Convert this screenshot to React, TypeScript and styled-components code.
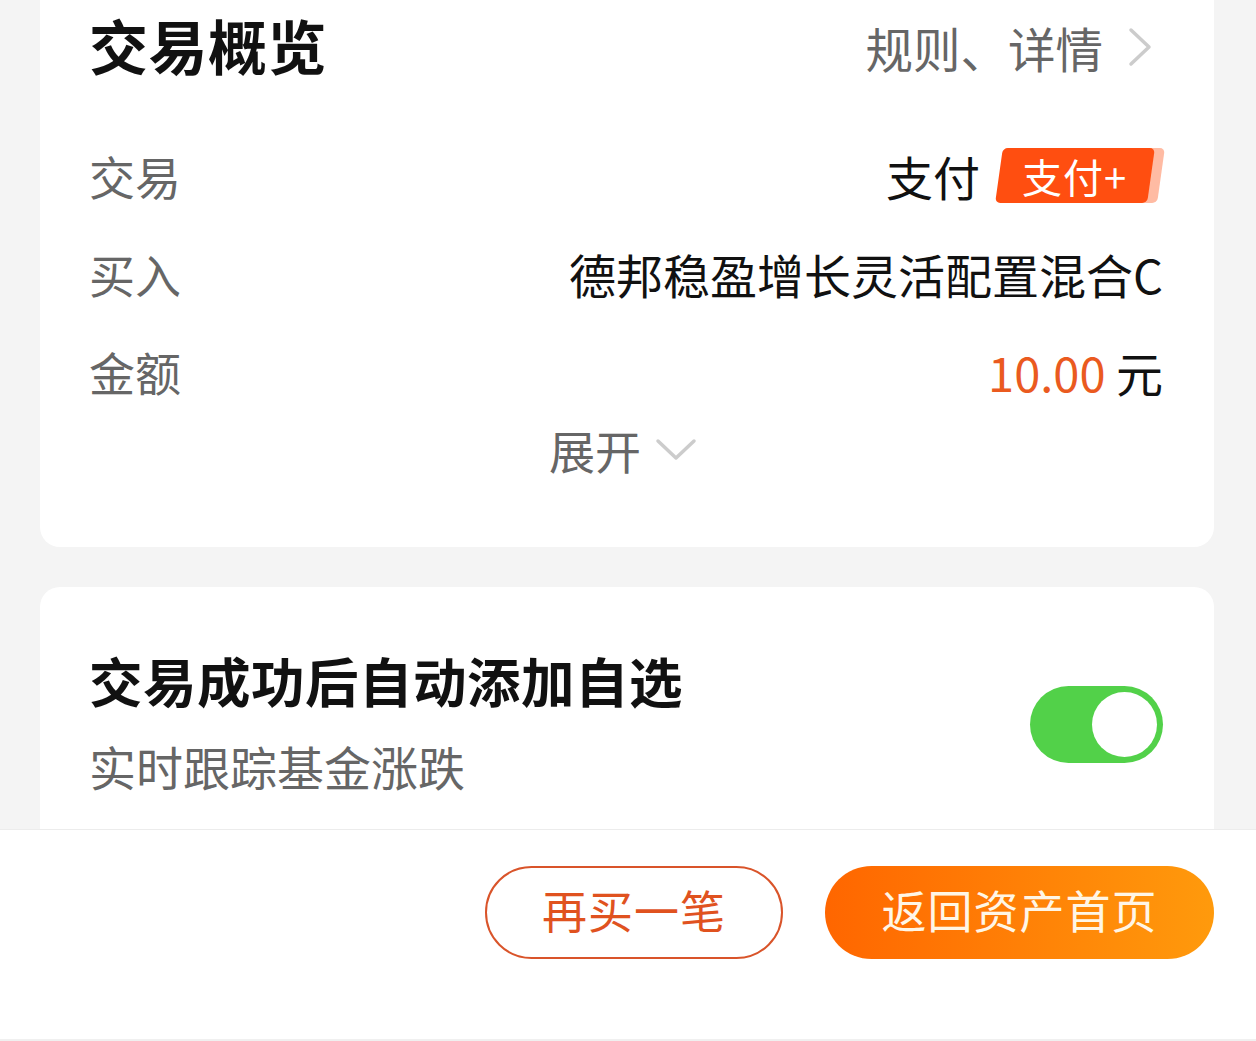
import React, { useState } from 'react';
import styled, { createGlobalStyle } from 'styled-components';

const GlobalStyle = createGlobalStyle`
  html, body {
    margin: 0;
    padding: 0;
    background: #f4f4f4;
  }
  * {
    box-sizing: border-box;
  }
  body {
    font-family: "Noto Sans CJK SC", "Noto Sans", sans-serif;
  }
`;

const Page = styled.div`
  height: 1041px;
  display: flex;
  flex-direction: column;
  overflow: hidden;
  background: #f4f4f4;
`;

const Content = styled.div`
  flex: 1;
  min-height: 0;
  overflow: hidden;
  padding: 0 42px 0 40px;
  display: flex;
  flex-direction: column;
  gap: 40px;
`;

const Card = styled.section<{ $clipTop?: boolean }>`
  background: #fff;
  border-radius: ${({ $clipTop }) => ($clipTop ? '0 0 20px 20px' : '20px')};
  padding: ${({ $clipTop }) => ($clipTop ? '0 51px 69px 49px' : '56px 51px 60px 49px')};
  flex-shrink: 0;
`;

const Header = styled.div`
  height: 90px;
  display: flex;
  align-items: center;
  justify-content: space-between;
  margin-bottom: 36px;
`;

const Title = styled.h2<{ $size?: number }>`
  margin: 0;
  font-size: ${({ $size }) => $size ?? 59}px;
  font-weight: 700;
  color: #111;
  line-height: 1.4;
  letter-spacing: 0.5px;
`;

const HeaderLink = styled.a`
  display: flex;
  align-items: center;
  gap: 24px;
  margin-right: 10px;
  font-size: 47.5px;
  color: #666;
  text-decoration: none;
  padding-top: 4px;
`;

const Row = styled.div`
  height: 98px;
  display: flex;
  align-items: center;
  justify-content: space-between;
`;

const Label = styled.span`
  font-size: 46px;
  color: #666;
`;

const Value = styled.span<{ $tone?: 'accent' | 'plain' }>`
  font-size: 47px;
  color: ${({ $tone }) => ($tone === 'accent' ? '#ea5a1f' : '#111')};
  display: inline-flex;
  align-items: center;
`;

const ValueGroup = styled.div`
  display: flex;
  align-items: center;
  gap: 19px;
`;

const Badge = styled.span`
  display: inline-flex;
  align-items: center;
  justify-content: center;
  height: 55px;
  width: 152px;
  margin-right: 12px;
  border-radius: 5px;
  background: #ff4e10;
  box-shadow: 10px 0 0 #ffbba3;
  transform: skewX(-8deg);
`;

const BadgeText = styled.span`
  display: inline-block;
  transform: skewX(8deg);
  color: #fff;
  font-size: 40px;
  line-height: 1;
  letter-spacing: 1px;
`;

const Expand = styled.button`
  height: 58px;
  width: 100%;
  display: flex;
  align-items: center;
  justify-content: center;
  gap: 14px;
  border: none;
  background: none;
  padding: 0 6px 0 0;
  font-family: inherit;
  font-size: 46px;
  color: #666;
  cursor: pointer;
`;

const SettingRow = styled.div`
  display: flex;
  align-items: center;
  justify-content: space-between;
`;

const SettingText = styled.div`
  display: flex;
  flex-direction: column;
  gap: 15px;
`;

const SubText = styled.span`
  font-size: 47px;
  color: #666;
  line-height: 1.4;
`;

const Switch = styled.button<{ $on: boolean }>`
  width: 133px;
  height: 77px;
  margin-top: 8px;
  border-radius: 39px;
  border: none;
  padding: 6px;
  background: ${({ $on }) => ($on ? '#52d149' : '#ddd')};
  display: flex;
  justify-content: ${({ $on }) => ($on ? 'flex-end' : 'flex-start')};
  align-items: center;
  cursor: pointer;
`;

const Knob = styled.span`
  width: 65px;
  height: 65px;
  border-radius: 50%;
  background: #fff;
`;

const BottomBar = styled.footer`
  height: 212px;
  flex-shrink: 0;
  background: #fff;
  border-top: 1px solid #ececec;
  border-bottom: 2px solid #f0f0f0;
  display: flex;
  justify-content: flex-end;
  align-items: flex-start;
  gap: 42px;
  padding: 36px 42px 0 0;
`;

const ActionButton = styled.button<{ $variant: 'outline' | 'solid' }>`
  height: 93px;
  width: ${({ $variant }) => ($variant === 'outline' ? 298 : 389)}px;
  border-radius: 47px;
  padding: 0 0 6px;
  font-family: inherit;
  font-size: 45px;
  letter-spacing: 1px;
  cursor: pointer;
  border: ${({ $variant }) => ($variant === 'outline' ? '2px solid #d9542a' : 'none')};
  background: ${({ $variant }) =>
    $variant === 'outline' ? '#fff' : 'linear-gradient(90deg, #ff6600 0%, #ff9a0c 100%)'};
  color: ${({ $variant }) => ($variant === 'outline' ? '#e0521f' : '#fff6e6')};
`;

const ChevronRight = () => (
  <svg width="26" height="40" viewBox="0 0 26 40" fill="none">
    <polyline points="4,3 22,20 4,37" stroke="#cccccc" strokeWidth="3.5" strokeLinecap="round" strokeLinejoin="round" />
  </svg>
);

const ChevronDown = () => (
  <svg width="42" height="24" viewBox="0 0 42 24" fill="none">
    <polyline points="3,4 21,21 39,4" stroke="#cccccc" strokeWidth="3.5" strokeLinecap="round" strokeLinejoin="round" />
  </svg>
);

const App: React.FC = () => {
  const [autoAdd, setAutoAdd] = useState(true);

  return (
    <>
      <GlobalStyle />
      <Page>
        <Content>
          <Card $clipTop>
            <Header>
              <Title>交易概览</Title>
              <HeaderLink href="#">
                规则、详情
                <ChevronRight />
              </HeaderLink>
            </Header>
            <Row>
              <Label>交易</Label>
              <ValueGroup>
                <Value>支付</Value>
                <Badge>
                  <BadgeText>支付+</BadgeText>
                </Badge>
              </ValueGroup>
            </Row>
            <Row>
              <Label>买入</Label>
              <Value>德邦稳盈增长灵活配置混合C</Value>
            </Row>
            <Row>
              <Label>金额</Label>
              <Value>
                <Value $tone="accent">10.00</Value>
                &nbsp;元
              </Value>
            </Row>
            <Expand>
              展开
              <ChevronDown />
            </Expand>
          </Card>

          <Card>
            <SettingRow>
              <SettingText>
                <Title $size={53.5}>交易成功后自动添加自选</Title>
                <SubText>实时跟踪基金涨跌</SubText>
              </SettingText>
              <Switch $on={autoAdd} onClick={() => setAutoAdd(!autoAdd)}>
                <Knob />
              </Switch>
            </SettingRow>
          </Card>
        </Content>

        <BottomBar>
          <ActionButton $variant="outline">再买一笔</ActionButton>
          <ActionButton $variant="solid">返回资产首页</ActionButton>
        </BottomBar>
      </Page>
    </>
  );
};

export default App;
